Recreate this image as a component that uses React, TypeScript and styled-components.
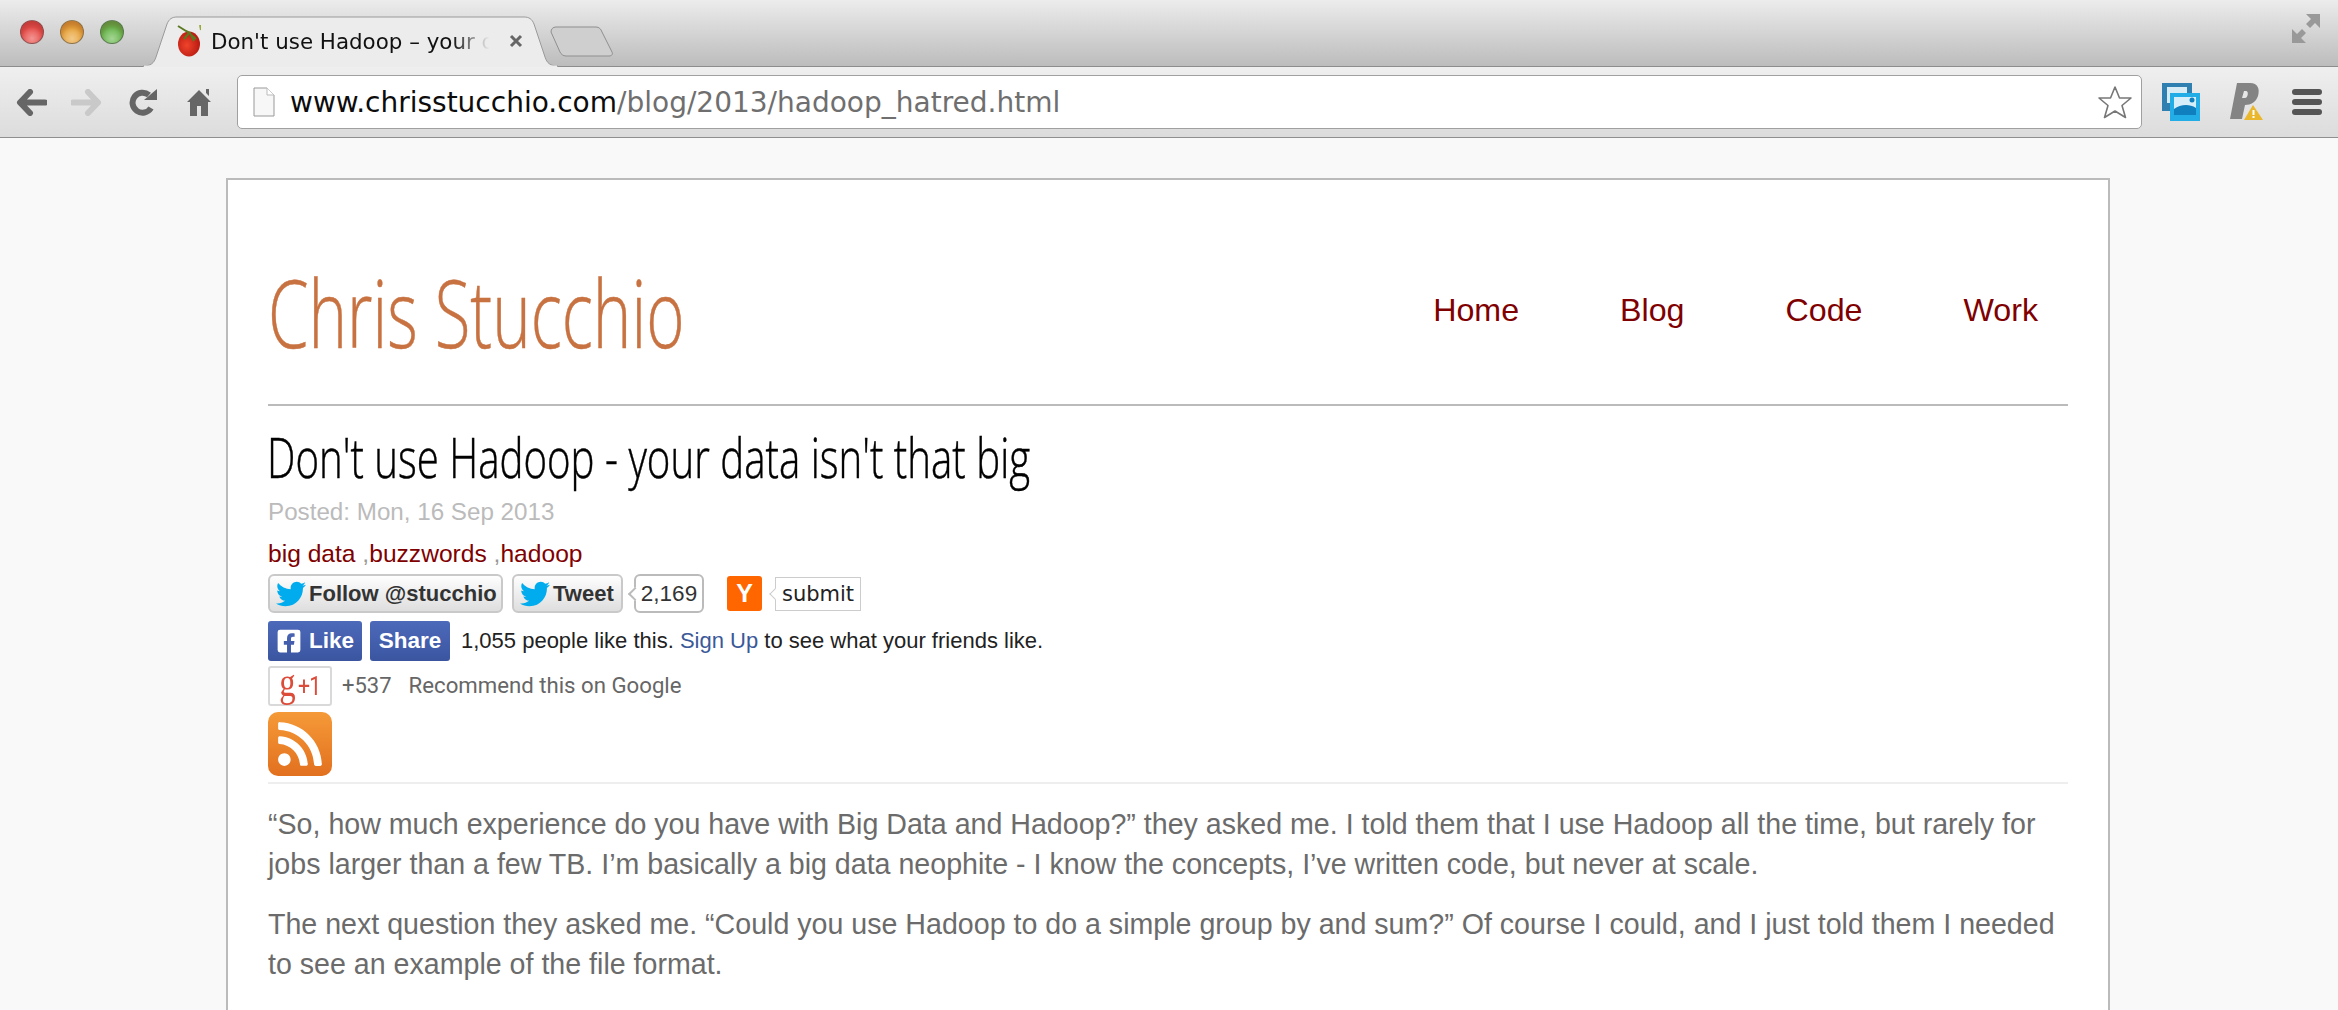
import React from "react";
import styled, { createGlobalStyle } from "styled-components";
import { FaTwitter, FaFacebookSquare, FaRss } from "react-icons/fa";

const GlobalStyle = createGlobalStyle`
  html, body {
    margin: 0;
    padding: 0;
    height: 100%;
    overflow: hidden;
    background: #f9f9f9;
  }
  #root {
    height: 100%;
  }
`;

const Window = styled.div`
  display: flex;
  flex-direction: column;
  height: 1010px;
  font-family: "Liberation Sans", Arial, sans-serif;
`;

const TitleBar = styled.div`
  display: flex;
  align-items: flex-start;
  height: 66px;
  flex: none;
  padding-right: 18px;
  background: linear-gradient(#ececec, #bcbcbc);
  border-bottom: 1px solid #8c8c8c;
`;

const Lights = styled.div`
  display: flex;
  gap: 16px;
  padding: 20px 0 0 20px;
  width: 123px;
  flex: none;
`;

const Light = styled.span<{ $tone: string }>`
  width: 24px;
  height: 24px;
  border-radius: 50%;
  border: 1px solid rgba(70, 70, 70, 0.55);
  box-sizing: border-box;
  background: radial-gradient(circle at 50% 80%, #fff6 0, transparent 55%),
    linear-gradient(${(p) => p.$tone}, ${(p) => p.$tone});
  box-shadow: inset 0 5px 5px rgba(90, 0, 0, 0.25);
`;

const Tab = styled.div`
  position: relative;
  display: flex;
  align-items: center;
  width: 415px;
  height: 51px;
  margin-top: 16px;
  flex: none;
  box-sizing: border-box;
  padding: 0 0 2px 34px;
  z-index: 1;
`;

const TabShape = styled.svg`
  position: absolute;
  inset: 0;
  z-index: -1;
`;

const TabTitle = styled.span`
  width: 284px;
  margin: 2px 0 0 10px;
  overflow: hidden;
  white-space: nowrap;
  font-family: "DejaVu Sans", sans-serif;
  font-size: 21.4px;
  color: #111;
  mask-image: linear-gradient(to right, #000 85%, transparent 98%);
`;

const TabClose = styled.svg`
  margin-left: 14px;
  flex: none;
`;

const NewTab = styled.svg`
  margin: 26px 0 0 -8px;
  flex: none;
`;

const Spring = styled.div`
  flex: 1;
`;

const ExpandIcon = styled.svg`
  margin-top: 14px;
  flex: none;
`;

const Toolbar = styled.div`
  display: flex;
  align-items: center;
  height: 71px;
  flex: none;
  padding: 0 18px 0 16px;
  box-sizing: border-box;
  background: linear-gradient(#efefef, #dcdcdc);
  border-bottom: 1px solid #8f8f8f;
`;

const NavIcon = styled.svg<{ $gap: number }>`
  flex: none;
  margin-right: ${(p) => p.$gap}px;
`;

const Omnibox = styled.div`
  flex: none;
  display: flex;
  align-items: center;
  width: 1905px;
  height: 54px;
  margin-left: 26px;
  margin-right: 20px;
  padding: 0 8px 0 15px;
  box-sizing: border-box;
  background: #fff;
  border: 1px solid #a0a0a0;
  border-radius: 5px;
`;

const Url = styled.div`
  flex: 1;
  margin-left: 15px;
  font-family: "DejaVu Sans", sans-serif;
  font-size: 28px;
  color: #6f6f6f;
  white-space: nowrap;
`;

const UrlHost = styled.span`
  color: #0c0c0c;
`;

const Page = styled.div`
  flex: 1;
  min-height: 0;
  overflow: hidden;
  padding: 40px 2px 0 0;
  background: #f9f9f9;
`;

const Card = styled.main`
  width: 1800px;
  height: 100%;
  margin: 0 auto;
  padding: 0 40px;
  background: #fff;
  border: 2px solid #bbb;
  border-bottom: 0;
`;

const Header = styled.header`
  display: flex;
  justify-content: space-between;
  align-items: center;
  height: 226px;
  padding-top: 44px;
  box-sizing: border-box;
  border-bottom: 2px solid #bbb;
`;

const Condensed = styled.span<{ $squeeze: number }>`
  display: inline-block;
  font-family: "Open Sans", sans-serif;
  font-weight: 300;
  white-space: nowrap;
  -webkit-text-stroke: 0.5px currentColor;
  transform: scaleX(${(p) => p.$squeeze});
  transform-origin: left center;
`;

const Brand = styled.h1`
  margin: 0;
  width: 420px;
  font-size: 94px;
  line-height: 110px;
  font-weight: 300;
  color: #c87241;
`;

const Nav = styled.nav`
  display: flex;
  gap: 101px;
  padding: 0 30px 8px 0;
`;

const NavLink = styled.a`
  font-size: 32.2px;
  color: #7f0000;
`;

const PostTitle = styled.h2`
  margin: 16px 0 0 -1px;
  font-size: 56px;
  line-height: 68px;
  font-weight: 300;
  color: #000;
`;

const Posted = styled.div`
  margin-top: 4px;
  font-size: 24.2px;
  line-height: 30px;
  color: #bbb;
`;

const Tags = styled.div`
  margin-top: 12px;
  font-size: 24.6px;
  line-height: 30px;
  color: #999;
`;

const Tag = styled.a`
  color: #800000;
`;

const SocialRow = styled.div<{ $height: number; $top: number }>`
  display: flex;
  align-items: center;
  height: ${(p) => p.$height}px;
  margin-top: ${(p) => p.$top}px;
`;

const TwitterButton = styled.a<{ $width: number }>`
  display: flex;
  align-items: center;
  gap: 3px;
  width: ${(p) => p.$width}px;
  height: 39px;
  margin-right: 9px;
  padding-left: 6px;
  box-sizing: border-box;
  border: 2px solid #c9c9c9;
  border-radius: 6px;
  background: linear-gradient(#fefefe, #dedede);
  font-size: 22px;
  font-weight: 700;
  color: #333;
  svg {
    color: #00aced;
    flex: none;
  }
`;

const Bubble = styled.span`
  position: relative;
  display: flex;
  align-items: center;
  justify-content: center;
  width: 70px;
  height: 39px;
  margin-left: 2px;
  box-sizing: border-box;
  background: #fff;
  border: 2px solid #bbb;
  border-radius: 6px;
  font-size: 22.5px;
  color: #333;
  &::before {
    content: "";
    position: absolute;
    left: -6px;
    top: 13px;
    width: 8px;
    height: 8px;
    background: #fff;
    border-left: 2px solid #bbb;
    border-bottom: 2px solid #bbb;
    transform: rotate(45deg);
  }
`;

const HnLogo = styled.span`
  display: flex;
  align-items: center;
  justify-content: center;
  width: 35px;
  height: 35px;
  margin-left: 23px;
  border-radius: 3px;
  background: #ff6600;
  color: #fff;
  font-size: 25px;
  font-weight: 700;
`;

const HnSubmit = styled.span`
  position: relative;
  display: flex;
  align-items: center;
  justify-content: center;
  width: 86px;
  height: 34px;
  margin-left: 13px;
  box-sizing: border-box;
  background: #fff;
  border: 1px solid #ccc;
  font-family: "DejaVu Sans", sans-serif;
  font-size: 21px;
  color: #222;
  &::before {
    content: "";
    position: absolute;
    left: -5px;
    top: 12px;
    width: 7px;
    height: 7px;
    background: #fff;
    border-left: 1px solid #ccc;
    border-bottom: 1px solid #ccc;
    transform: rotate(45deg);
  }
`;

const FacebookButton = styled.a<{ $width: number }>`
  display: flex;
  align-items: center;
  justify-content: center;
  gap: 7px;
  width: ${(p) => p.$width}px;
  height: 40px;
  margin-right: 8px;
  border-radius: 3px;
  background: linear-gradient(#4c69ba, #3b55a0);
  color: #fff;
  font-size: 22.5px;
  font-weight: 700;
`;

const FacebookText = styled.span`
  margin-left: 3px;
  font-size: 22px;
  color: #222;
`;

const FacebookLink = styled.a`
  color: #3b5998;
`;

const PlusOne = styled.a`
  display: flex;
  align-items: center;
  justify-content: center;
  width: 64px;
  height: 40px;
  box-sizing: border-box;
  background: #fff;
  border: 2px solid #d9d9d9;
  border-radius: 3px;
  font-family: "Liberation Serif", serif;
  color: #dd4b39;
`;

const PlusG = styled.span`
  display: inline-block;
  font-size: 42px;
  line-height: 34px;
  margin: -9px -2px 0 0;
  transform: scaleX(0.78);
`;

const PlusNum = styled.span`
  display: inline-block;
  font-family: "Roboto", sans-serif;
  font-size: 25px;
  letter-spacing: -1px;
  transform: scaleX(0.85);
`;

const PlusCount = styled.span`
  margin: -2px 0 0 10px;
  font-family: "Roboto", sans-serif;
  font-size: 22px;
  color: #666;
`;

const PlusLabel = styled.span`
  margin: -2px 0 0 17px;
  font-family: "Roboto", sans-serif;
  font-size: 22.2px;
  color: #666;
`;

const RssBadge = styled.a`
  display: flex;
  align-items: center;
  justify-content: center;
  width: 64px;
  height: 64px;
  border-radius: 10px;
  background: linear-gradient(#f59a38, #e2701f);
  color: #fff;
`;

const Rule = styled.hr`
  height: 2px;
  margin: 6px 0 0;
  border: 0;
  background: #eee;
`;

const Paragraph = styled.p<{ $top: number }>`
  margin: ${(p) => p.$top}px 0 0;
  font-size: 28.6px;
  line-height: 40px;
  color: #6b6b6b;
`;

const Favicon = () => (
  <svg width="24" height="32" viewBox="0 0 24 32" style={{ flex: "none" }}>
    <defs>
      <radialGradient id="tomato" cx="0.4" cy="0.55" r="0.6">
        <stop offset="0" stopColor="#f0442c" />
        <stop offset="1" stopColor="#b81a10" />
      </radialGradient>
    </defs>
    <ellipse cx="12" cy="19" rx="11" ry="12.5" fill="url(#tomato)" />
    <path d="M1 1l8 5 4 2 4 8M12 8l-5 6M13 9l6 5" stroke="#5b7a22" strokeWidth="2" fill="none" />
    <path d="M23 0l1 5" stroke="#9aa83a" strokeWidth="2" />
  </svg>
);

const Bird = ({ size }: { size: number }) => <FaTwitter size={size} />;

export default function App() {
  return (
    <Window>
      <GlobalStyle />
      <TitleBar>
        <Lights>
          <Light $tone="#e8504c" />
          <Light $tone="#e8a53c" />
          <Light $tone="#69b84e" />
        </Lights>
        <Tab>
          <TabShape width="415" height="51" viewBox="0 0 415 51">
            <path
              d="M0 50C8 50 11 47 13 41L24 8C26 3 29 1 34 1H381C386 1 389 3 391 8L402 41C404 47 407 50 415 50V51H0Z"
              fill="#ececec"
              stroke="#9a9a9a"
            />
            <path d="M1 50.5H414" stroke="#ececec" strokeWidth="2" />
          </TabShape>
          <Favicon />
          <TabTitle>Don't use Hadoop – your data isn't that big</TabTitle>
          <TabClose width="14" height="14" viewBox="0 0 14 14">
            <path d="M2 2l10 10M12 2L2 12" stroke="#666" strokeWidth="3" />
          </TabClose>
        </Tab>
        <NewTab width="64" height="31" viewBox="0 0 64 31">
          <path
            d="M1 6C1 3 3 1 6 1H46C49 1 51 3 52 6L62 26C63 28 62 30 59 30H16C13 30 11 28 10 26Z"
            fill="#cfcfcf"
            stroke="#8f8f8f"
          />
        </NewTab>
        <Spring />
        <ExpandIcon width="28" height="29" viewBox="0 0 28 29" fill="#999">
          <path d="M14 0H28V14L23 9L18 14L14 10L19 5Z" />
          <path d="M0 15L5 20L10 15L14 19L9 24L14 29H0Z" />
        </ExpandIcon>
      </TitleBar>
      <Toolbar>
        <NavIcon $gap={24} width="31" height="27" viewBox="0 0 31 27">
          <path d="M14 3L4 13.500L14 24M5 13.500H29" fill="none" stroke="#666" strokeWidth="6" strokeLinecap="round" strokeLinejoin="round" />
        </NavIcon>
        <NavIcon $gap={27} width="31" height="27" viewBox="0 0 31 27">
          <path d="M17 3L27 13.500L17 24M26 13.500H2" fill="none" stroke="#c9c9c9" strokeWidth="6" strokeLinecap="round" strokeLinejoin="round" />
        </NavIcon>
        <NavIcon $gap={30} width="28" height="27" viewBox="0 0 28 27">
          <path d="M22 19A10 10 0 1 1 20 6" fill="none" stroke="#666" strokeWidth="6" />
          <path d="M15 11H28V0Z" fill="#666" />
        </NavIcon>
        <NavIcon $gap={0} width="24" height="28" viewBox="0 0 24 28">
          <path fill="#666" d="M12 2L24 14H21V28H14V18H10V28H3V14H0ZM19 1H22V8L19 5Z" />
        </NavIcon>
        <Omnibox>
          <svg width="22" height="30" viewBox="0 0 22 30" style={{ flex: "none" }}>
            <path d="M1 1H14L21 8V29H1Z" fill="#f7f7f7" stroke="#999" />
            <path d="M14 1V8H21" fill="#fff" stroke="#bbb" />
          </svg>
          <Url>
            <UrlHost>www.chrisstucchio.com</UrlHost>/blog/2013/hadoop_hatred.html
          </Url>
          <svg width="36" height="35" viewBox="0 0 36 35">
            <path
              d="M18 2L22.500 13H34L25 20.500L28.500 32.500L18 26L7.500 32.500L11 20.500L2 13H13.500Z"
              fill="#fff"
              stroke="#777"
              strokeWidth="1.6"
              strokeLinejoin="round"
            />
          </svg>
        </Omnibox>
        <svg width="38" height="38" viewBox="0 0 38 38" style={{ flex: "none", marginRight: 30 }}>
          <rect x="0" y="0" width="30" height="28" fill="#2f7fb0" />
          <rect x="5" y="4" width="20" height="16" fill="#d8ecf6" />
          <rect x="8" y="10" width="30" height="28" fill="#22ade6" />
          <rect x="12" y="14" width="22" height="18" fill="#d5eef9" />
          <path d="M12 32V26C18 22 26 20 34 25V32Z" fill="#0f7fbd" />
          <circle cx="30" cy="17" r="2.500" fill="#0f7fbd" />
        </svg>
        <svg width="34" height="38" viewBox="0 0 34 38" style={{ flex: "none", marginRight: 28 }}>
          <path d="M7 0H20C28 0 30 6 28 13C26 19 21 22 15 22L12 36H0Z M14 8L12 15H15C18 15 19 8 16 8Z" fill="#848484" fillRule="evenodd" />
          <path d="M23 22L33 37H14Z" fill="#eab72c" />
          <rect x="22.500" y="27" width="2" height="5" fill="#fff" />
          <rect x="22.500" y="33" width="2" height="2" fill="#fff" />
        </svg>
        <svg width="30" height="27" viewBox="0 0 30 27" style={{ flex: "none" }} fill="#555">
          <rect x="0" y="0" width="30" height="6" rx="3" />
          <rect x="0" y="10" width="30" height="6" rx="3" />
          <rect x="0" y="20" width="30" height="6" rx="3" />
        </svg>
      </Toolbar>
      <Page>
        <Card>
          <Header>
            <Brand>
              <Condensed $squeeze={0.695}>Chris Stucchio</Condensed>
            </Brand>
            <Nav>
              <NavLink>Home</NavLink>
              <NavLink>Blog</NavLink>
              <NavLink>Code</NavLink>
              <NavLink>Work</NavLink>
            </Nav>
          </Header>
          <PostTitle>
            <Condensed $squeeze={0.718}>Don't use Hadoop - your data isn't that big</Condensed>
          </PostTitle>
          <Posted>Posted: Mon, 16 Sep 2013</Posted>
          <Tags>
            <Tag>big data </Tag>,<Tag>buzzwords </Tag>,<Tag>hadoop</Tag>
          </Tags>
          <SocialRow $height={39} $top={5}>
            <TwitterButton $width={235}>
              <Bird size={30} />
              Follow @stucchio
            </TwitterButton>
            <TwitterButton $width={111}>
              <Bird size={30} />
              Tweet
            </TwitterButton>
            <Bubble>2,169</Bubble>
            <HnLogo>Y</HnLogo>
            <HnSubmit>submit</HnSubmit>
          </SocialRow>
          <SocialRow $height={40} $top={8}>
            <FacebookButton $width={94}>
              <FaFacebookSquare size={26} />
              Like
            </FacebookButton>
            <FacebookButton $width={80}>Share</FacebookButton>
            <FacebookText>
              1,055 people like this. <FacebookLink>Sign Up</FacebookLink> to see what your friends like.
            </FacebookText>
          </SocialRow>
          <SocialRow $height={40} $top={5}>
            <PlusOne>
              <PlusG>g</PlusG>
              <PlusNum>+1</PlusNum>
            </PlusOne>
            <PlusCount>+537</PlusCount>
            <PlusLabel>Recommend this on Google</PlusLabel>
          </SocialRow>
          <SocialRow $height={64} $top={6}>
            <RssBadge>
              <FaRss size={50} />
            </RssBadge>
          </SocialRow>
          <Rule />
          <Paragraph $top={20}>
            “So, how much experience do you have with Big Data and Hadoop?” they asked me. I told them that I use Hadoop all the time, but rarely for jobs larger than a few TB. I’m basically a big data neophite - I know the concepts, I’ve written code, but never at scale.
          </Paragraph>
          <Paragraph $top={20}>
            The next question they asked me. “Could you use Hadoop to do a simple group by and sum?” Of course I could, and I just told them I needed to see an example of the file format.
          </Paragraph>
        </Card>
      </Page>
    </Window>
  );
}
